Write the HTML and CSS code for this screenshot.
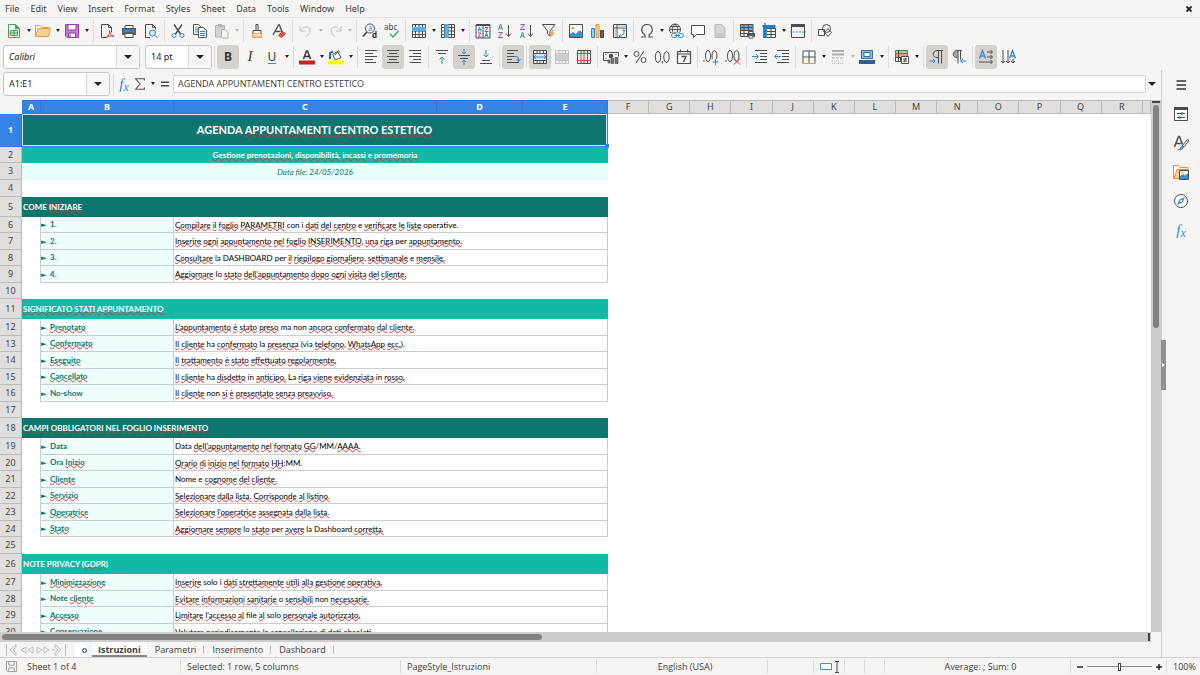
FILE: index.html
```html
<!DOCTYPE html>
<html lang="it">
<head>
<meta charset="utf-8">
<title>Agenda Appuntamenti</title>
<meta name="viewport" content="width=device-width, initial-scale=1">
<link rel="stylesheet" href="styles.css">
</head>
<body class="app">

<header class="menubar">
  <nav class="menus" aria-label="Menu">
    <button>File</button><button>Edit</button><button>View</button><button>Insert</button><button>Format</button><button>Styles</button><button>Sheet</button><button>Data</button><button>Tools</button><button>Window</button><button>Help</button>
  </nav>
  <button class="close" aria-label="Close"><svg viewBox="0 0 8 8"><path d="M1.5 1.5l5 5M6.5 1.5l-5 5" stroke="#222" stroke-width="1.8"/></svg></button>
</header>

<div class="toolbar" role="toolbar" aria-label="Standard">
  <button class="tb" aria-label="New"><svg viewBox="0 0 16 16"><path d="M2.500 1.500h7l4 4v9h-11z" fill="#fff" stroke="#35a854"/><path d="M9.500 1.500v4h4z" fill="#35a854" stroke="#35a854"/><path d="M4.500 7.500h7v5h-7z" fill="#cfeed7" stroke="#35a854"/><path d="M5 10h6M8 8v4" stroke="#35a854"/></svg></button><button class="drop" aria-label="New options"></button>
  <button class="tb" aria-label="Open"><svg viewBox="0 0 16 16"><path d="M.5 13.500v-11h5l1.500 2h7v2" fill="#fff" stroke="#ec9a3c"/><path d="M.5 13.500l2.500-8h12.500l-2 8z" fill="#fbd38d" stroke="#ec9a3c"/></svg></button><button class="drop" aria-label="Open options"></button>
  <button class="tb" aria-label="Save"><svg viewBox="0 0 16 16"><path d="M1.500 1.500h13v13h-11.500l-1.500-1.500z" fill="#c77ad0" stroke="#9b3fa8"/><path d="M4 1.500h8v5.500h-8z" fill="#fff" stroke="#9b3fa8"/><path d="M4.500 10h7v4.500h-7z" fill="#fff" stroke="#9b3fa8"/><path d="M6 11v3" stroke="#4d4d4d"/></svg></button><button class="drop" aria-label="Save options"></button>
  <span class="sep"></span>
  <button class="tb" aria-label="Export as PDF"><svg viewBox="0 0 16 16"><path class="k" d="M8 14.500h-5.500v-13h7l3 3v5M9.500 1.500v3h3"/><path d="M7 14.500c3-2 4-4 3.500-7 .5 4 2 5.500 4.500 5.500-3-.3-5 .2-8 1.500z" fill="none" stroke="#dd3b3b"/></svg></button>
  <button class="tb" aria-label="Print"><svg viewBox="0 0 16 16"><path d="M1 5h14v7h-14z" fill="#5b6670"/><path d="M4 2.500h8v3h-8z" fill="#fff" stroke="#4d4d4d"/><path d="M3 8h10" stroke="#2a8ad4" stroke-width="2"/><path d="M4 10.500h8v4h-8z" fill="#fff" stroke="#4d4d4d"/></svg></button>
  <button class="tb" aria-label="Print preview"><svg viewBox="0 0 16 16"><path class="k" d="M7 14.500h-4.500v-13h7l3 3v2M9.500 1.500v3h3"/><circle cx="9.500" cy="10" r="3" fill="#d4eafa" stroke="#2a8ad4"/><path class="b" d="M11.700 12.200l3 2.800"/></svg></button>
  <span class="sep"></span>
  <button class="tb" aria-label="Cut"><svg viewBox="0 0 16 16"><path class="k" d="M4 1.500l6.500 9.500M12 1.500l-6.500 9.500" stroke-width="1.400"/><circle class="b" cx="4" cy="12.500" r="2"/><circle class="b" cx="12" cy="12.500" r="2"/></svg></button>
  <button class="tb" aria-label="Copy"><svg viewBox="0 0 16 16"><path d="M1.500 1.500h5l3 3v7h-8z" fill="#fff" stroke="#555"/><path d="M6.500 4.500h5l3 3v7h-8z" fill="#fff" stroke="#555"/><path class="b" d="M3 5h3M3 7h3M3 9h3M8 8.500h5M8 10.500h5M8 12.500h5"/></svg></button>
  <button class="tb" aria-label="Paste"><svg viewBox="0 0 16 16"><path d="M1.500 2.500h9v11.500h-9z" fill="#d4d2d0" stroke="#b4b2b0"/><path d="M4 1h4v3h-4z" fill="#b4b2b0"/><path d="M7.500 6.500h4l2.500 2.500v6h-6.500z" fill="#f6f5f4" stroke="#b4b2b0"/></svg></button><button class="drop off" aria-label="Paste options"></button>
  <span class="sep"></span>
  <button class="tb" aria-label="Clone formatting"><svg viewBox="0 0 16 16"><path class="k" d="M7 7v-5.500h2v5.500M4 7.500h8v3h-8z"/><path d="M3.500 10.500h9v4h-9z" fill="#fff" stroke="#ec9a3c"/><path d="M4 13h8" stroke="#ec9a3c"/></svg></button>
  <button class="tb" aria-label="Clear formatting"><svg viewBox="0 0 16 16"><path class="k" d="M2 12l5.500-10h1l2.500 7M4.500 8.500h5" stroke-width="1.300"/><path d="M7.500 12.500l4-4 3 2-4 4z" fill="#ef5350" stroke="#d43a3a"/></svg></button>
  <span class="sep"></span>
  <button class="tb" aria-label="Undo"><svg viewBox="0 0 16 16"><path class="g" d="M2 3v5h5M2.500 7.500c3-5 10-4.500 9.500.5-.3 2-2 3.500-4 6"/></svg></button><button class="drop off" aria-label="Undo options"></button>
  <button class="tb" aria-label="Redo"><svg viewBox="0 0 16 16"><path class="g" d="M14 3v5h-5M13.500 7.500c-3-5-10-4.500-9.500.5.3 2 2 3.500 4 6"/></svg></button><button class="drop off" aria-label="Redo options"></button>
  <span class="sep"></span>
  <button class="tb" aria-label="Find and replace"><svg viewBox="0 0 16 16"><circle cx="8" cy="5.500" r="4.500" fill="#fff" stroke="#4d4d4d"/><path class="k" d="M5 9l-4 4.500" stroke-width="1.800"/><text x="6" y="8" class="t8" fill="#2a8ad4">a</text><text x="10" y="15" class="t8 tb-bold" fill="#333">d</text></svg></button>
  <button class="tb" aria-label="Spelling"><svg viewBox="0 0 16 16"><text x="0" y="7" class="t8" fill="#444">abc</text><path d="M6 11l3 3 5.500-6" fill="none" stroke="#2ea85a" stroke-width="1.300"/></svg></button>
  <span class="sep"></span>
  <button class="tb" aria-label="Row"><svg viewBox="0 0 16 16"><path class="k" d="M1.500 1.500h13v13h-13zM1.500 4.500h13M1.500 8h13M1.500 11.500h13M4.500 1.500v13M8 1.500v13M11.500 1.500v13"/><path d="M1 4h14v4h-14z" fill="#5ab0ee"/></svg></button><button class="drop" aria-label="Row options"></button>
  <button class="tb" aria-label="Column"><svg viewBox="0 0 16 16"><path class="k" d="M1.500 1.500h13v13h-13zM1.500 4.500h13M1.500 8h13M1.500 11.500h13M4.500 1.500v13M8 1.500v13M11.500 1.500v13"/><path d="M4.500 1h4v14h-4z" fill="#5ab0ee"/></svg></button><button class="drop" aria-label="Column options"></button>
  <span class="sep"></span>
  <button class="tb" aria-label="Sort"><svg viewBox="0 0 16 16"><path class="k" d="M1 1.500h14v13.500h-14zM8 1v14"/><path d="M1 2h14" stroke="#4d4d4d" stroke-width="2"/><path class="b" d="M3 8.500l1.500-4.500 1.500 4.500M3.500 7h2M10 14l1.500-4.500 1.500 4.500M10.500 12.500h2"/><path class="v" d="M3 10h3l-3 4h3.500M10 4.500h3l-3 4h3.500"/></svg></button>
  <button class="tb" aria-label="Sort ascending"><svg viewBox="0 0 16 16"><path class="b" d="M1.500 7l2-6 2 6M2 5h3"/><path class="v" d="M1.500 9.500h4l-4 5h4.500"/><path class="k" d="M11.500 2v11M9 10.500l2.500 3 2.500-3"/></svg></button>
  <button class="tb" aria-label="Sort descending"><svg viewBox="0 0 16 16"><path class="v" d="M1.500 1.500h4l-4 5h4.500"/><path class="b" d="M1.500 15l2-6 2 6M2 13h3"/><path class="k" d="M11.500 2v11M9 10.500l2.500 3 2.500-3"/></svg></button>
  <button class="tb" aria-label="AutoFilter"><svg viewBox="0 0 16 16"><path class="k" d="M1.500 1.500h12.500l-5 6.500v5l-2.500-2v-3z" /><path d="M11.500 7l-3 4h2l-1.500 4.500 5-6h-2.500l2-2.500z" fill="#f5a742"/></svg></button>
  <span class="sep"></span>
  <button class="tb" aria-label="Insert image"><svg viewBox="0 0 16 16"><path d="M1.500 1.500h13v13h-13z" fill="#fff" stroke="#4d4d4d"/><circle cx="5" cy="5" r="1.500" fill="#f5a742"/><path d="M2 14v-3l3-2 3 2 3.500-4 3 3v4z" fill="#3b8fd3"/></svg></button>
  <button class="tb" aria-label="Insert chart"><svg viewBox="0 0 16 16"><path d="M1.500 5.500h3v9h-3z" fill="#9bcdf2" stroke="#2a8ad4"/><path d="M6 1.500h3v13h-3z" fill="#fbc67a" stroke="#ec9a3c"/><path d="M10.500 7.500h3v7h-3z" fill="#666" stroke="#444"/></svg></button>
  <button class="tb" aria-label="Pivot table"><svg viewBox="0 0 16 16"><path class="k" d="M1.500 1.500h13v13h-13zM1.500 5h13M5 1.500v13"/><path d="M6 2.500h8v2h-8zM2.500 6h2v8h-2z" fill="#ccc"/><path class="b" d="M12 7v3.500l-3 2.500H7M10.500 8l1.500-1.500 1.500 1.500M8.500 11.500l-1.500 1.500 1.500 1.500"/></svg></button>
  <span class="sep"></span>
  <button class="tb" aria-label="Special character"><svg viewBox="0 0 16 16"><path class="k" d="M2 14h4v-2c-5-3-4-10.500 2-10.500s7 7.500 2 10.500v2h4" stroke-width="1.200"/></svg></button><button class="drop" aria-label="Special character options"></button>
  <button class="tb" aria-label="Hyperlink"><svg viewBox="0 0 16 16"><circle class="k" cx="7" cy="6.500" r="5.500"/><path class="k" d="M1.500 6.500h11M3 3.500h8M3 9.500h8M7 1c-4 4-3 8 0 11M7 1c4 4 3 8 0 11"/><path d="M3 9.500h13v6h-13z" fill="#f6f5f4"/><rect class="b" x="3.500" y="10.500" width="5.500" height="4" rx="2"/><rect class="b" x="10" y="10.500" width="5.500" height="4" rx="2"/><path class="b" d="M7 12.500h5"/></svg></button>
  <button class="tb" aria-label="Comment"><svg viewBox="0 0 16 16"><path d="M1.500 2.500h13v9h-8l-3 3v-3h-2z" fill="#fff" stroke="#4d4d4d"/></svg></button>
  <button class="tb" aria-label="Headers and footers"><svg viewBox="0 0 16 16"><path d="M3 1.500h6.500l3.500 3.500v9.500h-10z" fill="#d8d6d4" stroke="#bcbab8"/><path d="M4 11h8M4 13h8" stroke="#bcbab8"/></svg></button>
  <span class="sep"></span>
  <button class="tb" aria-label="Print area"><svg viewBox="0 0 16 16"><path d="M1 1h13v6h-13z" fill="#5ab0ee"/><path class="k" d="M1.500 1.500h12.500v12h-12.500zM1.500 4.500h12M1.500 7.500h12M1.500 10.500h12M5 1.500v12M9.500 1.500v12"/><path d="M8 10h8v4h-8z" fill="#4d5a66"/><path d="M10 8.500h4v2h-4zM10 12.500h4v2.500h-4z" fill="#fff" stroke="#4d5a66"/></svg></button>
  <button class="tb" aria-label="Freeze rows and columns"><svg viewBox="0 0 16 16"><path d="M2 2h12.500v4h-8.500v9h-4z" fill="#2a8ad4"/><path class="k" d="M6 5.500h8.500v9h-8.500M6 8.500h8.500M6 11.500h8.500M10 5.500v9"/><path d="M4 0v6M1 3h6M7 3h7M4 7v7" stroke="#0c5fa5" stroke-dasharray="2 1"/></svg></button><button class="drop" aria-label="Freeze options"></button>
  <button class="tb" aria-label="Split window"><svg viewBox="0 0 16 16"><path class="k" d="M1.500 2.500h13v12h-13z"/><path d="M1 2.500h14" stroke="#4d4d4d" stroke-width="3"/><path d="M0 9h16" stroke="#2a8ad4" stroke-dasharray="2 1"/></svg></button>
  <span class="sep"></span>
  <button class="tb" aria-label="Show draw functions"><svg viewBox="0 0 16 16"><path class="k" d="M1.500 6.500h6v6h-6zM11 5.500l3.500 4-3.500 4-3.500-4z"/><circle class="k" cx="9.500" cy="5.500" r="4"/></svg></button>
</div>

<div class="toolbar" role="toolbar" aria-label="Formatting">
  <div class="combo font-combo"><input class="italic" aria-label="Font name" value="Calibri"><button class="combo-arrow" aria-label="Choose font"></button></div>
  <div class="combo size-combo"><input aria-label="Font size" value="14 pt"><button class="combo-arrow" aria-label="Choose size"></button></div>
  <span class="sep"></span>
  <button class="tb on letter tb-bold" aria-label="Bold">B</button>
  <button class="tb letter serif italic" aria-label="Italic">I</button>
  <button class="tb letter" aria-label="Underline"><span class="under">U</span></button><button class="drop" aria-label="Underline options"></button>
  <span class="sep"></span>
  <button class="tb" aria-label="Font color"><svg viewBox="0 0 16 16"><path d="M4.500 10l3-8h1l3 8M5.500 7.500h5" fill="none" stroke="#333" stroke-width="1.500"/><path d="M0 11.500h16v4h-16z" fill="#c9211e"/></svg></button><button class="drop" aria-label="Font color options"></button>
  <button class="tb" aria-label="Highlighting"><svg viewBox="0 0 16 16"><path d="M4.500 5.500l5-3 3.500 6-5.500 2.500z" fill="#fff" stroke="#4d4d4d"/><path class="k" d="M7 6l3.500-4.500 1.500 2"/><path d="M2 10v-6l3-1.500" fill="none" stroke="#1d6db5" stroke-width="2"/><path d="M0 11.500h16v4h-16z" fill="#ff0"/></svg></button><button class="drop" aria-label="Highlighting options"></button>
  <span class="sep"></span>
  <button class="tb" aria-label="Align left"><svg viewBox="0 0 16 16"><path class="k" d="M2 1.500h12M2 4.500h8M2 7.500h12M2 10.500h8M2 13.500h11"/></svg></button>
  <button class="tb on" aria-label="Center horizontally"><svg viewBox="0 0 16 16"><path class="k" d="M2 1.500h12M4 4.500h8M2 7.500h12M4 10.500h8M2 13.500h12"/></svg></button>
  <button class="tb" aria-label="Align right"><svg viewBox="0 0 16 16"><path class="k" d="M2 1.500h12M6 4.500h8M2 7.500h12M6 10.500h8M3 13.500h11"/></svg></button>
  <span class="sep"></span>
  <button class="tb" aria-label="Align top"><svg viewBox="0 0 16 16"><path class="k" d="M2 1.500h12M4 4.500h8"/><path class="b" d="M8 15v-7M5.500 10.500l2.500-2.500 2.500 2.500"/></svg></button>
  <button class="tb on" aria-label="Center vertically"><svg viewBox="0 0 16 16"><path class="k" d="M2 6.500h12M4 9.500h8"/><path class="b" d="M8 0v5M6 3l2 2 2-2M8 16v-5M6 13l2-2 2 2"/></svg></button>
  <button class="tb" aria-label="Align bottom"><svg viewBox="0 0 16 16"><path class="k" d="M4 11.500h8M2 14.500h12"/><path class="b" d="M8 1v7M5.500 5.500l2.500 2.500 2.500-2.500"/></svg></button>
  <span class="sep"></span>
  <button class="tb on" aria-label="Wrap text"><svg viewBox="0 0 16 16"><path class="k" d="M2 1.500h11M2 4.500h7M2 7.500h7M2 10.500h5M2 13.500h12"/><path class="b" d="M9 7.500h2.500q2 0 2 2.500v2M11.500 10l2 2.500 2-2.500"/></svg></button>
  <span class="sep"></span>
  <button class="tb on" aria-label="Merge and center cells"><svg viewBox="0 0 16 16"><path d="M1.500 1.500h13v13h-13z" fill="#fff"/><path class="k" d="M1.500 1.500h13v13h-13zM1.500 4.500h13M1.500 11.500h13M5 1.500v3M8 1.500v3M11.500 1.500v3M5 11.500v3M8 11.500v3M11.500 11.500v3"/><path d="M2 5h12v6h-12z" fill="#d5eaf9"/><path class="b" d="M2 8h12M4 6l-2 2 2 2M12 6l2 2-2 2"/></svg></button>
  <button class="tb" aria-label="Merge cells"><svg viewBox="0 0 16 16"><path class="g" d="M1.500 1.500h13v13h-13zM1.500 4.500h13M1.500 11.500h13M5 1.500v3M8 1.500v3M11.500 1.500v3M5 11.500v3M8 11.500v3M11.500 11.500v3"/><path d="M2 5h12v6h-12z" fill="#d0cecc"/></svg></button>
  <button class="tb" aria-label="Unmerge cells"><svg viewBox="0 0 16 16"><path class="k" d="M1.500 1.500h13v13h-13zM5 1.500v3M8 1.500v3M11.500 1.500v3M5 11.500v3M8 11.500v3M11.500 11.500v3"/><path d="M1 4.500h14M1 11.500h14M5 4.500v7M8 4.500v7M11.500 4.500v7" stroke="#dd3b3b" fill="none"/></svg></button>
  <span class="sep"></span>
  <button class="tb" aria-label="Currency format"><svg viewBox="0 0 16 16"><path class="k" d="M5 11.500h-4.500v-8h15v4"/><circle cx="8" cy="7" r="2.200" fill="#4d4d4d"/><path class="k" d="M2.500 5.500h1M12.500 5.500h1M2.500 9.500h1" /><path d="M5 11h2v3h-2zM8 9.500h2.500v5h-2.500zM12 8.500h3v6h-3z" fill="#777" stroke="#444" stroke-width=".6"/></svg></button><button class="drop" aria-label="Currency options"></button>
  <button class="tb" aria-label="Percent format"><svg viewBox="0 0 16 16"><circle class="k" cx="4.500" cy="5" r="2.500"/><circle class="k" cx="11.500" cy="11" r="2.500"/><path class="k" d="M12 2l-8 12"/></svg></button>
  <button class="tb" aria-label="Number format"><svg viewBox="0 0 16 16"><ellipse class="k" cx="4" cy="8" rx="2.700" ry="5.500"/><ellipse class="k" cx="12.500" cy="8" rx="2.700" ry="5.500"/><path class="k" d="M8.300 12v2.500"/></svg></button>
  <button class="tb" aria-label="Date format"><svg viewBox="0 0 16 16"><path class="k" d="M1.500 2.500h13v12h-13zM1.500 5h13M4.500 .5v3M11.500 .5v3" stroke-width="1.200"/><path class="k" d="M5.500 7.500h4.500l-2.500 5.500" stroke-width="1.300"/></svg></button>
  <span class="sep"></span>
  <button class="tb" aria-label="Add decimal place"><svg viewBox="0 0 16 16"><ellipse class="k" cx="5" cy="7" rx="2.500" ry="5.500"/><ellipse class="k" cx="11.500" cy="7" rx="2.500" ry="5.500"/><path class="k" d="M1 11v2"/><path d="M9 10h7v6h-7z" fill="#f6f5f4"/><path class="b" d="M12.500 10v6M9.500 13h6"/></svg></button>
  <button class="tb" aria-label="Delete decimal place"><svg viewBox="0 0 16 16"><ellipse class="k" cx="5" cy="7" rx="2.500" ry="5.500"/><ellipse class="k" cx="11.500" cy="7" rx="2.500" ry="5.500"/><path class="k" d="M1 11v2"/><path d="M9 9.500l6 6M15 9.500l-6 6" stroke="#dd3b3b"/></svg></button>
  <span class="sep"></span>
  <button class="tb" aria-label="Increase indent"><svg viewBox="0 0 16 16"><path class="k" d="M3 1.500h12M8 4.500h7M8 7.500h7M8 10.500h7M3 13.500h12"/><path class="b" d="M0 7.500h6M4 5l2.500 2.500-2.500 2.500"/></svg></button>
  <button class="tb" aria-label="Decrease indent"><svg viewBox="0 0 16 16"><path class="k" d="M3 1.500h12M8 4.500h7M8 7.500h7M8 10.500h7M3 13.500h12"/><path class="b" d="M1 7.500h6M3 5l-2.500 2.500 2.500 2.500"/></svg></button>
  <span class="sep"></span>
  <button class="tb" aria-label="Borders"><svg viewBox="0 0 16 16"><path d="M2 2h12v12h-12z" fill="#fff"/><path class="k" d="M2 14v-12h12v12M8 2v12M2 8h12"/><path d="M1.500 14.500h13" stroke="#ec9a3c"/></svg></button><button class="drop" aria-label="Border options"></button>
  <button class="tb" aria-label="Border style"><svg viewBox="0 0 16 16"><path d="M2 2h12M2 5.500h12" stroke="#aaa" stroke-width="2"/><path d="M2 9h12" stroke="#aaa" stroke-dasharray="3 1"/><path d="M2 12h12M2 14.500h12" stroke="#bbb" stroke-dasharray="1 1"/></svg></button><button class="drop off" aria-label="Border style options"></button>
  <button class="tb" aria-label="Border color"><svg viewBox="0 0 16 16"><path d="M2.500 1.500h11v8h-11z" fill="#7cc0f0" stroke="#3a6f9c"/><path d="M5 3.500h6v4h-6z" fill="#fff" stroke="#3a6f9c"/><path d="M0 11h16v4h-16z" fill="#2a6099"/></svg></button><button class="drop" aria-label="Border color options"></button>
  <span class="sep"></span>
  <button class="tb" aria-label="Conditional formatting"><svg viewBox="0 0 16 16"><path d="M1.500 1.500h12v3h-12z" fill="#8fd6a3" stroke="#3c8a52"/><path d="M1.500 4.500h12v4h-12z" fill="#f59a93" stroke="#b7504a"/><path class="k" d="M1.500 8.500h5v4h-5zM4.500 1.500v11"/><path d="M7.500 7.500h7v7h-7z" fill="#fff" stroke="#4d4d4d"/><path class="k" d="M9 10h4M9 12h4M12 8.500l-2 5"/></svg></button><button class="drop" aria-label="Conditional options"></button>
  <span class="sep"></span>
  <button class="tb on" aria-label="Left to right"><svg viewBox="0 0 16 16"><path class="k" d="M14 1.500h-6c-5 .5-5 7 0 7h1.500M9.500 1.500v13M12.500 1.500v13"/><path class="b" d="M0 12h6M4 10l2 2-2 2"/></svg></button>
  <button class="tb" aria-label="Right to left"><svg viewBox="0 0 16 16"><path d="M7 1.500c-6 0-6 7 0 7z" fill="#aaa"/><path class="k" d="M11 1.500h-5c-5 .5-5 7 0 7M7 1.500v13M9.500 1.500v9"/><path class="b" d="M9.500 12h6M12 10l-2.500 2 2.500 2"/></svg></button>
  <span class="sep"></span>
  <button class="tb on" aria-label="Text direction left to right"><svg viewBox="0 0 16 16"><path d="M1.500 9.500l3-8 3 8M2.500 7h4" fill="none" stroke="#2a8ad4" stroke-width="1.300"/><path class="k" d="M9 3h5M12.500 1l2 2-2 2M9 8h5M12.500 6l2 2-2 2M1 13h13M12.500 11l2 2-2 2"/></svg></button>
  <button class="tb" aria-label="Text direction top to bottom"><svg viewBox="0 0 16 16"><path d="M9.500 9.500l3-8 3 8M10.500 7h4" fill="none" stroke="#2a8ad4" stroke-width="1.300"/><path class="k" d="M3 1v13M1 12l2 2 2-2M8 1v13M6 12l2 2 2-2M13 10v4M11 12l2 2 2-2"/></svg></button>
</div>

<div class="workspace">
  <main class="document">
    <div class="formula-bar">
      <div class="combo name-combo"><input aria-label="Name box" value="A1:E1"><button class="combo-arrow" aria-label="Choose range"></button></div>
      <span class="sep"></span>
      <button class="fb fx" aria-label="Function wizard">f<sub>x</sub></button>
      <button class="fb" aria-label="Select function"><svg viewBox="0 0 16 16"><path d="M13 4v-2h-10l5 6-5 6h10v-2" fill="none" stroke="#555" stroke-width="1.200"/></svg></button><button class="drop fdrop" aria-label="Function options"></button>
      <button class="fb" aria-label="Formula"><svg viewBox="0 0 16 16"><path d="M3.500 6h9M3.500 10h9" stroke="#444" stroke-width="1.600"/></svg></button>
      <input class="formula" aria-label="Input line" value="AGENDA APPUNTAMENTI CENTRO ESTETICO">
      <button class="expand" aria-label="Expand formula bar"></button>
    </div>

    <div class="sheet-area">
      <div class="viewport">
        <table class="sheet">
          <colgroup><col class="c-head"><col class="c-a"><col class="c-b"><col class="c-c"><col class="c-d"><col class="c-e"><col span="13"><col class="c-last"></colgroup>
          <thead>
            <tr><th class="corner"></th><th class="sel">A</th><th class="sel">B</th><th class="sel">C</th><th class="sel">D</th><th class="sel">E</th><th>F</th><th>G</th><th>H</th><th>I</th><th>J</th><th>K</th><th>L</th><th>M</th><th>N</th><th>O</th><th>P</th><th>Q</th><th>R</th><th></th></tr>
          </thead>
          <tbody>
            <tr class="title-row"><th class="sel">1</th><td colspan="5" class="title">AGENDA <u>APPUNTAMENTI</u> <u>CENTRO</u> <u>ESTETICO</u></td></tr>
            <tr><th>2</th><td colspan="5" class="subtitle"><u>Gestione</u> <u>prenotazioni</u>, <u>disponibilità</u>, <u>incassi</u> e <u>promemoria</u></td></tr>
            <tr class="tall"><th>3</th><td colspan="5" class="date">Data file: 24/05/2026</td></tr>
            <tr class="tall"><th>4</th></tr>
            <tr class="section dark"><th>5</th><td colspan="5">COME <u>INIZIARE</u></td></tr>
            <tr class="item"><th>6</th><td></td><td class="key">1.</td><td colspan="3" class="val"><u>Compilare</u> <u>il</u> <u>foglio</u> <u>PARAMETRI</u> con i <u>dati</u> <u>del</u> <u>centro</u> e <u>verificare</u> <u>le</u> <u>liste</u> operative.</td></tr>
            <tr class="item tall"><th>7</th><td></td><td class="key">2.</td><td colspan="3" class="val"><u>Inserire</u> <u>ogni</u> <u>appuntamento</u> <u>nel</u> <u>foglio</u> <u>INSERIMENTO</u>, <u>una</u> <u>riga</u> per <u>appuntamento.</u></td></tr>
            <tr class="item"><th>8</th><td></td><td class="key">3.</td><td colspan="3" class="val"><u>Consultare</u> la DASHBOARD per <u>il</u> <u>riepilogo</u> <u>giornaliero</u>, <u>settimanale</u> e <u>mensile.</u></td></tr>
            <tr class="item tall"><th>9</th><td></td><td class="key">4.</td><td colspan="3" class="val"><u>Aggiornare</u> lo <u>stato</u> <u>dell’appuntamento</u> <u>dopo</u> <u>ogni</u> <u>visita</u> <u>del</u> <u>cliente.</u></td></tr>
            <tr><th>10</th></tr>
            <tr class="section light"><th>11</th><td colspan="5"><u>SIGNIFICATO</u> <u>STATI</u> <u>APPUNTAMENTO</u></td></tr>
            <tr class="item tall"><th>12</th><td></td><td class="key"><u>Prenotato</u></td><td colspan="3" class="val"><u>L’appuntamento</u> <u>è</u> <u>stato</u> <u>preso</u> ma non <u>ancora</u> <u>confermato</u> <u>dal</u> <u>cliente.</u></td></tr>
            <tr class="item"><th>13</th><td></td><td class="key"><u>Confermato</u></td><td colspan="3" class="val"><u>Il</u> <u>cliente</u> ha <u>confermato</u> la <u>presenza</u> (via <u>telefono</u>, <u>WhatsApp</u> <u>ecc.</u>).</td></tr>
            <tr class="item tall"><th>14</th><td></td><td class="key"><u>Eseguito</u></td><td colspan="3" class="val"><u>Il</u> <u>trattamento</u> <u>è</u> <u>stato</u> <u>effettuato</u> <u>regolarmente.</u></td></tr>
            <tr class="item"><th>15</th><td></td><td class="key"><u>Cancellato</u></td><td colspan="3" class="val"><u>Il</u> <u>cliente</u> ha <u>disdetto</u> in <u>anticipo.</u> La <u>riga</u> <u>viene</u> <u>evidenziata</u> in <u>rosso.</u></td></tr>
            <tr class="item tall"><th>16</th><td></td><td class="key">No-show</td><td colspan="3" class="val"><u>Il</u> <u>cliente</u> non <u>si</u> <u>è</u> <u>presentato</u> <u>senza</u> <u>preavviso.</u></td></tr>
            <tr><th>17</th></tr>
            <tr class="section dark"><th>18</th><td colspan="5"><u>CAMPI</u> <u>OBBLIGATORI</u> <u>NEL</u> <u>FOGLIO</u> <u>INSERIMENTO</u></td></tr>
            <tr class="item tall"><th>19</th><td></td><td class="key">Data</td><td colspan="3" class="val">Data <u>dell’appuntamento</u> <u>nel</u> <u>formato</u> <u>GG</u>/MM/<u>AAAA.</u></td></tr>
            <tr class="item"><th>20</th><td></td><td class="key">Ora <u>Inizio</u></td><td colspan="3" class="val"><u>Orario</u> <u>di</u> <u>inizio</u> <u>nel</u> <u>formato</u> <u>HH</u>:MM.</td></tr>
            <tr class="item tall"><th>21</th><td></td><td class="key"><u>Cliente</u></td><td colspan="3" class="val">Nome e <u>cognome</u> <u>del</u> <u>cliente.</u></td></tr>
            <tr class="item"><th>22</th><td></td><td class="key"><u>Servizio</u></td><td colspan="3" class="val"><u>Selezionare</u> <u>dalla</u> <u>lista.</u> <u>Corrisponde</u> <u>al</u> <u>listino.</u></td></tr>
            <tr class="item tall"><th>23</th><td></td><td class="key"><u>Operatrice</u></td><td colspan="3" class="val"><u>Selezionare</u> <u>l’operatrice</u> <u>assegnata</u> <u>dalla</u> <u>lista.</u></td></tr>
            <tr class="item"><th>24</th><td></td><td class="key"><u>Stato</u></td><td colspan="3" class="val"><u>Aggiornare</u> <u>sempre</u> lo <u>stato</u> per <u>avere</u> la Dashboard <u>corretta.</u></td></tr>
            <tr class="tall"><th>25</th></tr>
            <tr class="section light"><th>26</th><td colspan="5">NOTE PRIVACY (<u>GDPR</u>)</td></tr>
            <tr class="item tall"><th>27</th><td></td><td class="key"><u>Minimizzazione</u></td><td colspan="3" class="val"><u>Inserire</u> solo i <u>dati</u> <u>strettamente</u> <u>utili</u> <u>alla</u> <u>gestione</u> <u>operativa.</u></td></tr>
            <tr class="item"><th>28</th><td></td><td class="key">Note <u>cliente</u></td><td colspan="3" class="val"><u>Evitare</u> <u>informazioni</u> <u>sanitarie</u> o <u>sensibili</u> non <u>necessarie.</u></td></tr>
            <tr class="item tall"><th>29</th><td></td><td class="key"><u>Accesso</u></td><td colspan="3" class="val"><u>Limitare</u> <u>l’accesso</u> <u>al</u> file <u>al</u> solo <u>personale</u> <u>autorizzato.</u></td></tr>
            <tr class="item"><th>30</th><td></td><td class="key"><u>Conservazione</u></td><td colspan="3" class="val"><u>Valutare</u> <u>periodicamente</u> la <u>cancellazione</u> <u>di</u> <u>dati</u> <u>obsoleti.</u></td></tr>
          </tbody>
        </table>
      </div>
      <div class="vscroll"><span class="vsplit"></span><span class="vthumb"></span></div>
    </div>
    <div class="hscroll"><span class="hthumb"></span><span class="hsplit"></span></div>

    <div class="tabbar">
      <button class="nav" aria-label="Scroll sheets"><svg viewBox="0 0 62 14"><path d="M1.500 1v12M11 1.500l-6 5.500 6 5.500v-3l-3-2.500 3-2.500zM21 4l-5 3 5 3zM28 4l-5 3 5 3zM32 4v6l5-3zM39 4v6l5-3zM47 7h3M50 1.500l6 5.500-6 5.500v-3l3-2.500-3-2.500zM60.500 1v12" fill="none" stroke="#c2c0be"/></svg></button>
      <button class="add" aria-label="Add sheet"><svg viewBox="0 0 13 14"><path d="M0 0h7l4 4v10h-11z" fill="#fff"/><circle cx="9.500" cy="7.500" r="2.500" fill="#3f6fb5"/><path d="M8 7.500h3M9.500 6v3" stroke="#fff"/></svg></button>
      <button class="tab active">Istruzioni</button><button class="tab">Parametri</button><button class="tab">Inserimento</button><button class="tab">Dashboard</button>
    </div>
  </main>

  <aside class="sidebar" aria-label="Sidebar">
    <button class="grip" aria-label="Hide sidebar"></button>
    <button class="sb" aria-label="Sidebar settings"><svg viewBox="0 0 16 16"><path d="M3.500 4h9.500M3.500 8h9.500M3.500 12h9.500" stroke="#333" stroke-width="1.500"/></svg></button>
    <button class="sb" aria-label="Properties"><svg viewBox="0 0 16 16"><path d="M1.500 1.500h13v13h-13z" fill="#fff" stroke="#4d4d4d"/><path d="M1 2.500h14" stroke="#4d4d4d" stroke-width="3"/><path class="k" d="M4 7.500h8M4 11.500h8"/><path d="M9 6v3M6.500 10v3" stroke="#2a8ad4" stroke-width="1.500"/></svg></button>
    <button class="sb" aria-label="Styles"><svg viewBox="0 0 16 16"><path d="M1.500 12l4-10.500h1l3 8M3 8.500h5" fill="none" stroke="#4d4d4d" stroke-width="1.500"/><path d="M9 11l5-6q2-1 1.500 1l-4.500 6z" fill="#fff" stroke="#4d4d4d"/><path d="M4 15q3-1 4.500-4l2.500 1.500q-2 3.500-7 2.500z" fill="#3b8fd3"/></svg></button>
    <button class="sb" aria-label="Gallery"><svg viewBox="0 0 16 16"><path d="M.5 14.500v-13h5l1.500 2h8v3" fill="#fff" stroke="#ec8a3c"/><path d="M1 14.500l3-9h11.500v9z" fill="#fbd38d" stroke="#ec8a3c"/><path d="M6.500 6.500h9v9h-9z" fill="#fff" stroke="#4d4d4d"/><path d="M7 15v-3l3-2 2 1.500 3-2.500v6z" fill="#3b8fd3"/><circle cx="9.500" cy="8.500" r="1" fill="#f5a742"/></svg></button>
    <button class="sb" aria-label="Navigator"><svg viewBox="0 0 16 16"><circle cx="8" cy="8" r="6.500" fill="#fff" stroke="#4d4d4d"/><path d="M12 4l-2.500 5.500-5.500 2.500 2.500-5.500z" fill="#3b8fd3"/><circle cx="8" cy="8" r="1" fill="#fff"/></svg></button>
    <button class="sb fx" aria-label="Functions">f<sub>x</sub></button>
  </aside>
</div>

<footer class="status">
  <span class="cell first"><svg class="disk" viewBox="0 0 12 12"><path d="M.5 .5h11v11h-10l-1-1zM3 .5v4h6v-4M3 11.500v-4h6v4" fill="none" stroke="#999"/></svg>Sheet 1 of 4</span>
  <span class="cell">Selected: 1 row, 5 columns</span>
  <span class="cell">PageStyle_Istruzioni</span>
  <span class="cell center">English (USA)</span>
  <span class="cell"></span>
  <span class="cell"><svg class="mode" viewBox="0 0 20 12"><path d="M.5 2.500h11v6h-11z" fill="#fff" stroke="#4a90c8"/><path d="M17 .5v11M15 .5h4M15 11.500h4" stroke="#444" fill="none"/></svg></span>
  <span class="cell"></span>
  <span class="cell"></span>
  <span class="cell center">Average: ; Sum: 0</span>
  <span class="cell zoom"><button class="zb" aria-label="Zoom out"><svg viewBox="0 0 8 8"><path d="M1 4h6" stroke="#222" stroke-width="1.500"/></svg></button><input type="range" class="range" aria-label="Zoom" value="50"><button class="zb" aria-label="Zoom in"><svg viewBox="0 0 8 8"><path d="M1 4h6M4 1v6" stroke="#222" stroke-width="1.500"/></svg></button></span>
  <span class="cell pct">100%</span>
</footer>
</body>
</html>
```

FILE: styles.css
```css
*, *::before, *::after { box-sizing: border-box; }

.app {
  margin: 0;
  height: 100vh;
  display: flex;
  flex-direction: column;
  overflow: hidden;
  background: #f6f5f4;
  color: #3d3d3d;
  font-family: "Noto Sans", sans-serif;
  font-size: 9px;
  line-height: 12px;
}

button, input {
  font: inherit;
  color: inherit;
  margin: 0;
  padding: 0;
  border: 0;
  background: none;
}

svg { display: block; overflow: visible; }
.k { fill: none; stroke: #4d4d4d; }
.b { fill: none; stroke: #2a8ad4; }
.g { fill: none; stroke: #c4c2c0; }
.v { fill: none; stroke: #a347ba; }
.t8 { font-size: 8px; }
.tb-bold { font-weight: 700; }
.italic { font-style: italic; }

/* Menu bar */
.menubar {
  flex: none;
  display: flex;
  justify-content: space-between;
  align-items: center;
  height: 17px;
  margin-right: 4px;
  padding-left: 5px;
}
.menus { display: flex; gap: 11px; }
.close { width: 14px; display: grid; place-items: center; }
.close svg { width: 8px; height: 8px; }

/* Toolbars */
.toolbar {
  flex: none;
  display: flex;
  align-items: center;
  height: 27px;
  padding-left: 3px;
}
.menubar + .toolbar { height: 26px; border-top: 1px solid #e2e0de; }
.tb {
  flex: none;
  width: 22px;
  height: 24px;
  display: grid;
  place-items: center;
  border-radius: 3px;
}
.tb svg { width: 16px; height: 16px; }
.on { background: #d5d1cd; }
.letter { font-size: 12px; line-height: 16px; color: #333; }
.serif { font-family: "Liberation Serif", serif; font-size: 14px; }
.under { border-bottom: 1px solid #2a8ad4; line-height: 13px; }
.drop {
  flex: none;
  width: 7px;
  height: 24px;
  display: grid;
  place-items: center;
}
.drop::after, .combo-arrow::after, .expand::after {
  content: "";
  border: solid transparent;
  border-width: 3px 2px 0;
  border-top-color: #222;
}
.off::after { border-top-color: #bbb; }
.sep {
  flex: none;
  width: 5px;
  height: 22px;
  background: linear-gradient(#dedcda, #dedcda) center / 1px 100% no-repeat;
}
.drop + .sep { width: 6px; }

.combo {
  flex: none;
  display: flex;
  height: 24px;
  border: 1px solid #cdc7c2;
  border-radius: 3px;
  background: #fff;
  overflow: hidden;
}
.combo input { flex: 1; min-width: 0; padding-left: 5px; color: #222; }
.combo-arrow {
  width: 23px;
  display: grid;
  place-items: center;
  border-left: 1px solid #d9d5d2;
  background: #f8f7f6;
}
.combo-arrow::after, .expand::after { border-width: 4px 4px 0; }
.font-combo { width: 137px; margin-right: 5px; }
.size-combo { width: 67px; }
.name-combo { width: 107px; }

/* Document and sidebar */
.workspace { flex: 1; min-height: 0; display: flex; }
.document { flex: 1; min-width: 0; display: flex; flex-direction: column; }
.formula-bar {
  flex: none;
  display: flex;
  align-items: center;
  height: 30px;
  padding: 0 4px 3px 3px;
}
.fb { width: 16px; height: 20px; display: grid; place-items: center; }
.fb svg { width: 14px; height: 14px; }
.formula-bar > .sep { width: 6px; }
.fx {
  display: block;
  font-family: "Liberation Serif", serif;
  font-style: italic;
  font-size: 15px;
  line-height: 16px;
  color: #2a8ad4;
}
.fx sub { font-size: 12px; line-height: 8px; vertical-align: -2px; }
.fdrop { width: 9px; }
.formula {
  flex: 1;
  min-width: 0;
  height: 18px;
  padding-left: 4px;
  border: 1px solid #d9d6d3;
  background: #fff;
  font-family: "Open Sans", sans-serif;
}
.expand { width: 11px; display: grid; place-items: center; }

.sheet-area { flex: 1; min-height: 0; display: flex; }
.viewport { flex: 1; min-width: 0; overflow: hidden; background: #fff; }
.sheet {
  width: 100%;
  table-layout: fixed;
  border-collapse: separate;
  border-spacing: 0;
  font-family: Lato, sans-serif;
  font-size: 8px;
  line-height: 12px;
  color: #000;
}
.c-head { width: 22px; }
.c-a { width: 19px; }
.c-b { width: 133px; }
.c-c { width: 263px; }
.c-d { width: 86px; }
.c-e { width: 85px; }
.c-last { width: 8px; }
.sheet th {
  padding: 0;
  font-family: "Noto Sans", sans-serif;
  font-size: 9px;
  font-weight: 400;
  color: #444;
  background: #e0dfde;
  border: solid #bdbbb9;
  border-width: 0 1px 1px 0;
}
.sheet thead th { height: 14px; border-top-width: 1px; }
.sheet .corner { background: #f6f5f4; border-color: #f6f5f4; }
.sheet .sel {
  font-weight: 700;
  color: #fff;
  background: #3584e4;
  border-color: #2f78d0;
}
.sheet td { padding: 0; }
.sheet tbody tr { height: 16px; }
.sheet .tall { height: 17px; }
.sheet .section { height: 20px; }
.sheet .title-row { height: 33px; }
.sheet u {
  text-decoration: underline wavy #e0302c 1px;
  text-decoration-skip-ink: none;
  text-underline-offset: -1px;
}
.title {
  position: relative;
  text-align: center;
  font-size: 11px;
  font-weight: 700;
  color: #fff;
  background: #0f766e;
  border: solid #3584e4;
  border-width: 0 1px 1px 0;
  box-shadow: inset 0 0 0 1px #cfe6f5;
}
.title::after {
  content: "";
  position: absolute;
  right: -2px;
  bottom: -2px;
  width: 4px;
  height: 4px;
  background: #3584e4;
}
.subtitle { text-align: center; font-weight: 700; color: #fff; background: #14b8a6; }
.date { text-align: center; font-style: italic; color: #0f766e; background: #e6fffa; }
.section td { font-weight: 700; color: #fff; }
.sheet .section td { padding-left: 1px; }
.dark td { background: #0f766e; }
.light td { background: #14b8a6; }
.item td { border: solid #c9cfce; border-width: 0 1px 0 0; }
.item .key, .item .val { border-bottom-width: 1px; }
.item .key {
  font-weight: 700;
  color: #0f766e;
  background: #f0fffb;
}
.key::before {
  content: "►";
  display: inline-block;
  width: 9px;
  font-family: "DejaVu Sans", sans-serif;
  font-size: 7px;
  font-weight: 400;
}
.sheet .val { padding-left: 1px; }

.vscroll {
  flex: none;
  width: 10px;
  display: flex;
  flex-direction: column;
  align-items: center;
  background: #cdcdcd;
}
.vsplit { width: 8px; height: 2px; margin: 1px 0 2px; background: #444; }
.vthumb { width: 6px; height: 42%; border-radius: 3px; background: #808180; }
.hscroll {
  flex: none;
  height: 10px;
  display: flex;
  align-items: center;
  justify-content: space-between;
  margin-right: 10px;
  padding-left: 2px;
  background: #cdcdcd;
}
.hthumb { width: 47%; height: 6px; border-radius: 3px; background: #808180; }
.hsplit { width: 2px; height: 8px; margin-right: 1px; background: #444; }

.tabbar {
  flex: none;
  display: flex;
  align-items: stretch;
  height: 15px;
  padding-left: 5px;
  font-family: "Open Sans", sans-serif;
}
.nav svg { width: 62px; height: 14px; }
.add { margin: 0 4px 0 8px; }
.add svg { width: 13px; height: 14px; }
.tab { position: relative; padding: 0 8px; }
.tab:not(.active)::after {
  content: "";
  position: absolute;
  right: 0;
  top: 4px;
  height: 8px;
  border-right: 1px solid #c4c2c0;
}
.active {
  padding: 0 6px;
  font-weight: 700;
  background: #fff;
  box-shadow: inset 0 -2px #8a8a8a;
}

.sidebar {
  position: relative;
  flex: none;
  width: 39px;
  display: flex;
  flex-direction: column;
  align-items: center;
  gap: 9px;
  padding-top: 5px;
  border-left: 1px solid #cfcdcb;
}
.sb { width: 20px; height: 20px; display: grid; place-items: center; }
.sb svg { width: 16px; height: 16px; }
.sb.fx, .fb.fx { display: block; }
.grip {
  position: absolute;
  left: -1px;
  top: 46%;
  width: 5px;
  height: 50px;
  background: #8f9190;
}
.grip::after {
  content: "";
  position: absolute;
  left: 1px;
  top: 23px;
  border: solid transparent;
  border-width: 2px 0 2px 3px;
  border-left-color: #fff;
}

/* Status bar */
.status {
  flex: none;
  display: grid;
  grid-template-columns: 181fr 220fr 196fr 171fr 46fr 31fr 20px 20px 186fr 96px 33px;
  align-items: center;
  height: 18px;
  border-top: 1px solid #d4d2d0;
  font-family: "Open Sans", sans-serif;
}
.cell {
  display: flex;
  align-items: center;
  height: 13px;
  padding-left: 6px;
  border-right: 1px solid #dcdad8;
}
.cell:last-child { border-right: 0; }
.first { gap: 10px; }
.center { justify-content: center; }
.disk { width: 11px; height: 11px; }
.mode { width: 20px; height: 12px; }
.zoom { gap: 3px; padding: 0 3px 0 5px; }
.zb { flex: none; width: 8px; }
.zb svg { width: 8px; height: 8px; }
.range {
  flex: 1;
  min-width: 0;
  height: 10px;
  appearance: none;
  background: linear-gradient(#8a8a8a, #8a8a8a) center / 100% 1px no-repeat;
}
.range::-webkit-slider-thumb {
  appearance: none;
  width: 3px;
  height: 8px;
  border: 1px solid #444;
  background: #fff;
}
```
